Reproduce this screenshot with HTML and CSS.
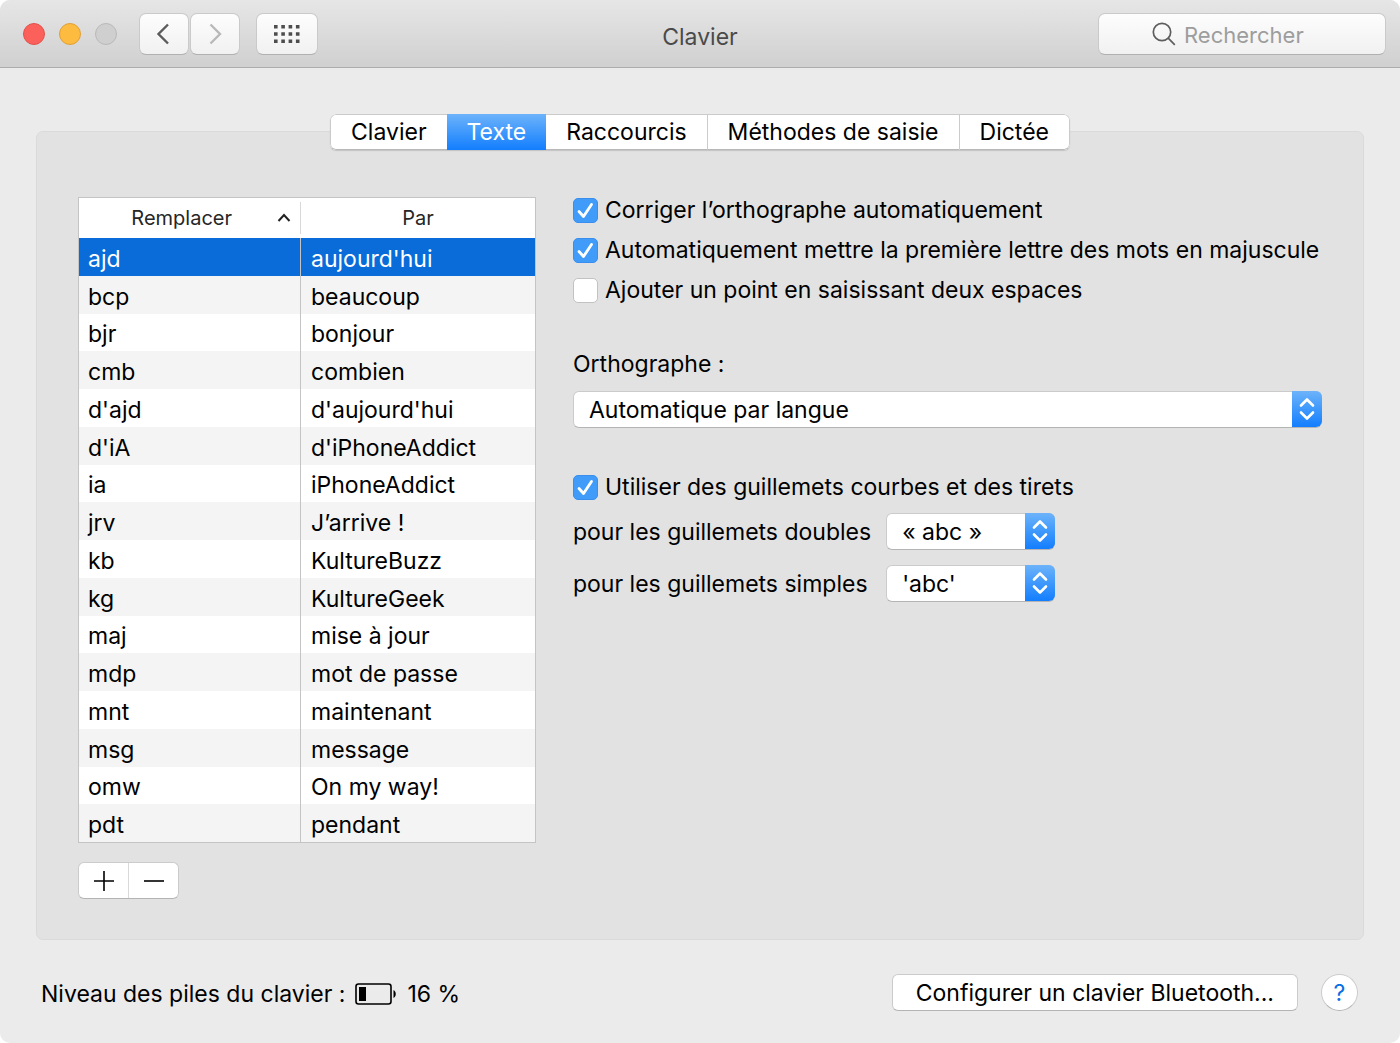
FILE: index.html
```html
<!DOCTYPE html>
<html lang="fr">
<head>
  <meta charset="UTF-8" />
  <meta name="viewport" content="width=device-width, initial-scale=1" />
  <title>Clavier</title>
  <link rel="stylesheet" href="styles.css">
</head>
<body>
  <div class="window">
    <header class="titlebar">
      <div class="toolbar">
        <div class="lights">
          <button class="light close" aria-label="Fermer"></button>
          <button class="light minimize" aria-label="Réduire"></button>
          <button class="light zoom" aria-label="Agrandir" disabled></button>
        </div>
        <div class="nav">
          <button class="tool-btn" aria-label="Précédent">
            <svg width="16" height="24" viewBox="0 0 16 24"><path d="M12 2.5 2.500 12l9.500 9.500" fill="none" stroke="#5c5c5c" stroke-width="2.4"/></svg>
          </button>
          <button class="tool-btn" aria-label="Suivant" disabled>
            <svg width="14" height="24" viewBox="0 0 14 24"><path d="M2.5 2.5 12 12l-9.500 9.500" fill="none" stroke="#b9b9b9" stroke-width="2.4"/></svg>
          </button>
        </div>
        <button class="tool-btn grid-btn" aria-label="Tout afficher">
          <svg width="26" height="18" viewBox="0 0 26 18">
            <path d="M0 1.75h26M0 9h26M0 16.25h26" stroke="#4d4d4d" stroke-width="3.5" stroke-dasharray="3.6 3.7"/>
          </svg>
        </button>
      </div>
      <h1>Clavier</h1>
      <label class="search">
        <svg width="24" height="24" viewBox="0 0 24 24" fill="none" stroke="#5e5e5e" stroke-width="1.7"><circle cx="10" cy="10" r="8.7"/><path d="m16.2 16.2 6.6 6.6"/></svg>
        <input type="search" placeholder="Rechercher" aria-label="Rechercher">
      </label>
    </header>

    <main>
      <div class="tabs" role="tablist">
        <button role="tab">Clavier</button>
        <button role="tab" class="active" aria-selected="true">Texte</button>
        <button role="tab">Raccourcis</button>
        <button role="tab">Méthodes de saisie</button>
        <button role="tab">Dictée</button>
      </div>

      <section class="panel">
        <div class="replacements">
          <table>
            <thead>
              <tr>
                <th class="sorted">
                  <div class="head">
                    <span>Remplacer</span>
                    <svg width="14" height="10" viewBox="0 0 14 10"><path d="m1.5 8 5.5-6 5.5 6" fill="none" stroke="#222" stroke-width="2"/></svg>
                  </div>
                </th>
                <th><div class="head"><span>Par</span></div></th>
              </tr>
            </thead>
            <tbody>
              <tr class="selected"><td>ajd</td><td>aujourd'hui</td></tr>
              <tr><td>bcp</td><td>beaucoup</td></tr>
              <tr><td>bjr</td><td>bonjour</td></tr>
              <tr><td>cmb</td><td>combien</td></tr>
              <tr><td>d'ajd</td><td>d'aujourd'hui</td></tr>
              <tr><td>d'iA</td><td>d'iPhoneAddict</td></tr>
              <tr><td>ia</td><td>iPhoneAddict</td></tr>
              <tr><td>jrv</td><td>J’arrive !</td></tr>
              <tr><td>kb</td><td>KultureBuzz</td></tr>
              <tr><td>kg</td><td>KultureGeek</td></tr>
              <tr><td>maj</td><td>mise à jour</td></tr>
              <tr><td>mdp</td><td>mot de passe</td></tr>
              <tr><td>mnt</td><td>maintenant</td></tr>
              <tr><td>msg</td><td>message</td></tr>
              <tr><td>omw</td><td>On my way!</td></tr>
              <tr><td>pdt</td><td>pendant</td></tr>
            </tbody>
          </table>
          <div class="add-remove">
            <button aria-label="Ajouter"><svg width="20" height="20" viewBox="0 0 20 20"><path d="M0 10h20M10 0v20" stroke="#000" stroke-width="1.6"/></svg></button>
            <button aria-label="Supprimer"><svg width="20" height="20" viewBox="0 0 20 20"><path d="M0 10h20" stroke="#000" stroke-width="1.6"/></svg></button>
          </div>
        </div>

        <form class="options" onsubmit="return false;">
          <div class="checks">
            <label class="check"><input type="checkbox" checked>Corriger l’orthographe automatiquement</label>
            <label class="check"><input type="checkbox" checked>Automatiquement mettre la première lettre des mots en majuscule</label>
            <label class="check"><input type="checkbox">Ajouter un point en saisissant deux espaces</label>
          </div>

          <div class="spelling">
            <label for="spelling">Orthographe :</label>
            <div class="popup">
              <select id="spelling"><option>Automatique par langue</option></select>
              <span class="arrows"><svg width="16" height="24" viewBox="0 0 16 24"><path d="m2 8.5 6-6 6 6M2 15.5l6 6 6-6"/></svg></span>
            </div>
          </div>

          <div class="quotes">
            <label class="check"><input type="checkbox" checked>Utiliser des guillemets courbes et des tirets</label>
            <div class="quote-grid">
              <label for="doubles">pour les guillemets doubles</label>
              <div class="popup">
                <select id="doubles"><option>« abc »</option></select>
                <span class="arrows"><svg width="16" height="24" viewBox="0 0 16 24"><path d="m2 8.5 6-6 6 6M2 15.5l6 6 6-6"/></svg></span>
              </div>
              <label for="simples">pour les guillemets simples</label>
              <div class="popup">
                <select id="simples"><option>'abc'</option></select>
                <span class="arrows"><svg width="16" height="24" viewBox="0 0 16 24"><path d="m2 8.5 6-6 6 6M2 15.5l6 6 6-6"/></svg></span>
              </div>
            </div>
          </div>
        </form>
      </section>
    </main>

    <footer>
      <div class="battery">
        <span>Niveau des piles du clavier :</span>
        <svg width="42" height="22" viewBox="0 0 42 22">
          <rect x="1" y="1" width="35" height="20" rx="2.5" fill="none" stroke="#000" stroke-width="1.6"/>
          <rect x="4" y="4" width="7" height="14"/>
          <path d="M38.5 7c3 1.500 3 6.500 0 8z"/>
        </svg>
        <span>16 %</span>
      </div>
      <div class="actions">
        <button class="push-btn">Configurer un clavier Bluetooth...</button>
        <button class="help-btn" aria-label="Aide">?</button>
      </div>
    </footer>
  </div>
</body>
</html>
```

FILE: styles.css
```css
* {
  box-sizing: border-box;
}
body {
  margin: 0;
  background: #fff;
  color: #000;
  font-family: Inter, "Liberation Sans", sans-serif;
  font-size: 23px;
  line-height: 28px;
}
button,
input,
select {
  font: inherit;
  color: inherit;
  margin: 0;
}
button {
  padding: 0;
  border: none;
  background: none;
}
svg {
  display: block;
  flex: none;
}
.window {
  min-height: 100vh;
  background: #ebebeb;
  border-radius: 10px;
  overflow: hidden;
}

/* Title bar */
.titlebar {
  display: grid;
  grid-template-columns: 1fr auto 1fr;
  align-items: center;
  height: 68px;
  padding: 0 14px;
  background: linear-gradient(#e6e6e6, #d0d0d0);
  border-bottom: 1px solid #acacac;
}
.titlebar h1 {
  margin: 6px 0 0;
  font-size: 23px;
  font-weight: 400;
  color: #4a4a4a;
}
.toolbar {
  display: flex;
  align-items: center;
}
.lights {
  display: flex;
  gap: 14px;
  margin: 0 22px 0 9px;
}
.light {
  width: 22px;
  height: 22px;
  border: 1px solid #b9b9b9;
  border-radius: 50%;
  background: #cfcfcf;
}
.close {
  background: #fc605b;
  border-color: #e2504b;
}
.minimize {
  background: #fdbc40;
  border-color: #e0a035;
}
.nav {
  display: flex;
  gap: 1px;
  margin-right: 16px;
}
.tool-btn,
.search {
  display: flex;
  align-items: center;
  height: 42px;
  border: 1px solid #cacaca;
  border-bottom-color: #b0b0b0;
  border-radius: 7px;
  background: linear-gradient(#fdfdfd, #f1f1f1);
}
.tool-btn {
  justify-content: center;
  width: 50px;
}
.grid-btn {
  width: 62px;
}
.search {
  gap: 8px;
  justify-self: end;
  width: 288px;
  padding-left: 53px;
}
.search input {
  flex: 1;
  min-width: 0;
  height: 32px;
  padding: 2px 0 0;
  border: none;
  outline: none;
  background: none;
  font-size: 22px;
}
.search input::placeholder {
  color: #9d9d9d;
}

/* Tabs */
main {
  padding: 46px 36px 0;
}
.tabs {
  position: relative;
  display: flex;
  width: max-content;
  margin: 0 auto;
  border-radius: 6px;
  background: #fff;
  box-shadow: 0 1px 1px #c4c4c4;
  overflow: hidden;
}
.tabs button {
  height: 36px;
  padding: 0 20px;
  border: 1px solid #cbcbcb;
  border-width: 1px 0 1px 1px;
  border-bottom-color: #b8b8b8;
}
.tabs button:first-child {
  border-radius: 6px 0 0 6px;
}
.tabs button:last-child {
  border-right-width: 1px;
  border-radius: 0 6px 6px 0;
}
.tabs .active {
  color: #fff;
  border: none;
  background: linear-gradient(#6cb3fa, #137efe);
}
.tabs .active + button {
  border-left: none;
}

/* Panel */
.panel {
  display: flex;
  gap: 37px;
  margin-top: -19px;
  padding: 65px 41px 40px;
  border: 1px solid #dadada;
  border-radius: 7px;
  background: #e2e2e2;
}
.replacements {
  flex: 0 0 458px;
}
table {
  width: 100%;
  height: 646px;
  table-layout: fixed;
  border: 1px solid #c4c4c4;
  border-spacing: 0;
  background: #fff;
}
th {
  height: 40px;
  padding: 3px 0;
  font-size: 20px;
  font-weight: 400;
  color: #262626;
}
th:first-child {
  width: 222px;
}
th:first-child .head {
  border-right: 1px solid #d9d9d9;
}
.head {
  display: flex;
  align-items: center;
  justify-content: center;
  height: 32px;
}
.sorted .head {
  justify-content: flex-end;
  gap: 45px;
  padding-right: 9px;
}
td {
  padding: 4px 9px 0;
}
td + td {
  padding-left: 10px;
}
td:first-child {
  border-right: 1px solid #c4c4c4;
}
tbody tr:nth-child(even) {
  background: #f4f4f4;
}
tbody .selected {
  background: #0a6cd9;
  color: #fff;
}
.add-remove {
  display: flex;
  width: 101px;
  margin-top: 19px;
}
.add-remove,
.popup select,
.push-btn,
.help-btn {
  height: 37px;
  border: 1px solid #cbcbcb;
  border-bottom-color: #b4b4b4;
  border-radius: 6px;
  background: #fff;
}
.add-remove button {
  display: flex;
  flex: 1;
  align-items: center;
  justify-content: center;
}
.add-remove button + button {
  border-left: 1px solid #d9d9d9;
}

/* Options */
.options {
  flex: 1;
  min-width: 0;
}
.checks {
  display: flex;
  flex-direction: column;
  gap: 14px;
}
.check {
  display: flex;
  align-items: center;
  gap: 7px;
  height: 26px;
  white-space: nowrap;
}
.check input {
  appearance: none;
  flex: none;
  width: 25px;
  height: 25px;
  border: 1px solid #c2c2c2;
  border-radius: 5px;
  background: #fff;
}
.check input:checked {
  border-color: #3a8fee;
  background: #419bf9 url("data:image/svg+xml,%3Csvg xmlns='http://www.w3.org/2000/svg' viewBox='0 0 25 25'%3E%3Cpath d='M6 13.500 10.500 18.500 18.500 6.500' fill='none' stroke='white' stroke-width='2.800' stroke-linecap='round' stroke-linejoin='round'/%3E%3C/svg%3E") center / 25px 25px;
}
.spelling {
  display: flex;
  flex-direction: column;
  gap: 13px;
  margin: 47px 0 46px;
}
.popup {
  position: relative;
}
.popup select {
  appearance: none;
  display: block;
  width: 100%;
  padding: 1px 40px 0 15px;
}
.arrows {
  position: absolute;
  top: 0;
  right: 0;
  display: flex;
  align-items: center;
  justify-content: center;
  width: 30px;
  height: 36px;
  border-radius: 0 6px 6px 0;
  background: linear-gradient(#6cb3fa, #137efe);
  pointer-events: none;
}
.arrows path {
  fill: none;
  stroke: #fff;
  stroke-width: 2.6;
  stroke-linecap: round;
  stroke-linejoin: round;
}
.quote-grid {
  display: grid;
  grid-template-columns: max-content 169px;
  align-items: center;
  gap: 15px;
  margin-top: 13px;
}

/* Footer */
footer {
  display: flex;
  align-items: center;
  justify-content: space-between;
  padding: 34px 42px 32px 41px;
}
.battery {
  display: flex;
  align-items: center;
  gap: 10px;
  padding-top: 2px;
}
.actions {
  display: flex;
  align-items: center;
  gap: 23px;
}
.push-btn {
  padding: 0 23px;
}
.help-btn {
  width: 37px;
  border-radius: 50%;
  color: #0a6fe0;
}
```
